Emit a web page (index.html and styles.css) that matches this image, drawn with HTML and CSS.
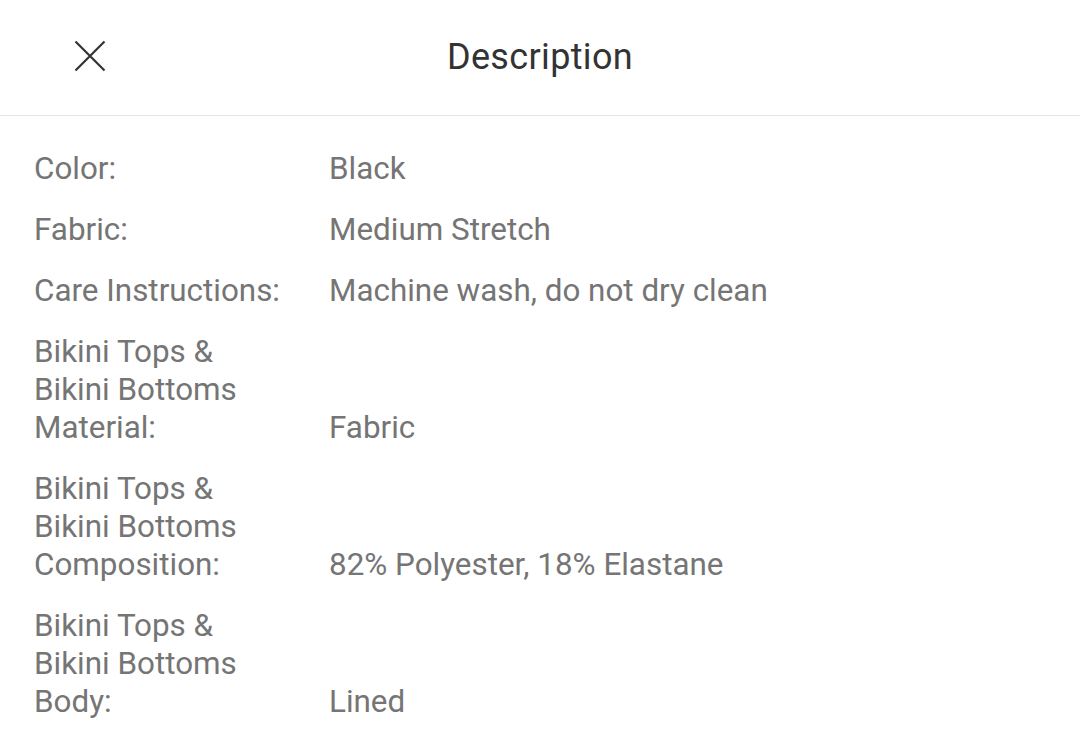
FILE: index.html
```html
<!DOCTYPE html>
<html>
<head>
<meta charset="utf-8">
<link rel="stylesheet" href="styles.css">
</head>
<body>
<div class="sheet">
  <header class="header">
    <button class="close" aria-label="Close">
      <svg width="32" height="32" viewBox="0 0 32 32"><path d="M1.5 1.5 L30.5 30.5 M30.5 1.5 L1.5 30.5" stroke="#333" stroke-width="2.2" fill="none"/></svg>
    </button>
    <h1 class="title">Description</h1>
  </header>
  <div class="specs">
    <div class="row"><div class="label">Color:</div><div class="value">Black</div></div>
    <div class="row"><div class="label">Fabric:</div><div class="value">Medium Stretch</div></div>
    <div class="row"><div class="label">Care Instructions:</div><div class="value">Machine wash, do not dry clean</div></div>
    <div class="row"><div class="label">Bikini Tops &amp; Bikini Bottoms Material:</div><div class="value">Fabric</div></div>
    <div class="row"><div class="label">Bikini Tops &amp; Bikini Bottoms Composition:</div><div class="value">82% Polyester, 18% Elastane</div></div>
    <div class="row"><div class="label">Bikini Tops &amp; Bikini Bottoms Body:</div><div class="value">Lined</div></div>
  </div>
</div>
</body>
</html>
```
FILE: styles.css
```css
html, body {
  margin: 0;
  padding: 0;
  background: #fff;
}
body {
  font-family: Roboto, "Liberation Sans", sans-serif;
  width: 1080px;
  height: 740px;
  overflow: hidden;
}
.header {
  position: relative;
  height: 113px;
  border-bottom: 1px solid #e5e5e5;
  display: flex;
  align-items: center;
  justify-content: center;
  padding-bottom: 2px;
}
.close {
  position: absolute;
  left: 74px;
  top: 40px;
  width: 32px;
  height: 32px;
  padding: 0;
  border: 0;
  background: none;
  display: flex;
}
.title {
  margin: 0;
  font-size: 36px;
  font-weight: 400;
  color: #333;
  letter-spacing: 0.35px;
}
.specs {
  padding: 34px 35px 0 34px;
  display: flex;
  flex-direction: column;
  gap: 23px;
}
.row {
  display: flex;
  align-items: flex-end;
  font-size: 31.4px;
  line-height: 38px;
  color: #757575;
}
.label {
  width: 252px;
  flex: 0 0 252px;
  margin-right: 43px;
}
.value {
  flex: 1;
}
```
